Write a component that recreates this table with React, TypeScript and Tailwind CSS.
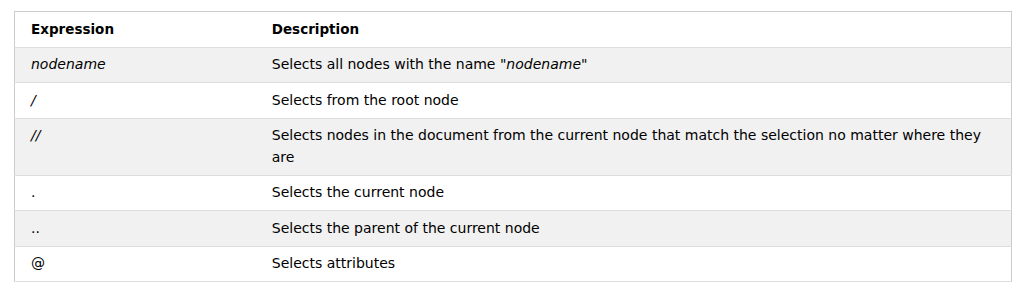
import React from 'react';

interface Row {
  expr: React.ReactNode;
  desc: React.ReactNode;
}

const ROWS: Row[] = [
  {
    expr: <i>nodename</i>,
    desc: (
      <>
        Selects all nodes with the name "<i>nodename</i>"
      </>
    ),
  },
  { expr: <i>/</i>, desc: 'Selects from the root node' },
  {
    expr: <i>//</i>,
    desc: 'Selects nodes in the document from the current node that match the selection no matter where they are',
  },
  { expr: '.', desc: 'Selects the current node' },
  { expr: '..', desc: 'Selects the parent of the current node' },
  { expr: '@', desc: 'Selects attributes' },
];

export default function App() {
  return (
    <div className="bg-white w-[1024px] h-[290px] pt-[11px] pl-[14px]" style={{ fontFamily: '"DejaVu Sans", Verdana, sans-serif' }}>
      <table className="w-[998px] border border-[#cccccc] border-collapse text-[14px] leading-[21.5px] text-black">
        <thead>
          <tr className="border-b border-[#dddddd]">
            <th className="w-[25%] text-left font-bold text-[13.5px] pl-4 pr-2 py-[6.5px]">Expression</th>
            <th className="text-left font-bold text-[13.5px] px-2 py-[6.5px]">Description</th>
          </tr>
        </thead>
        <tbody>
          {ROWS.map((row, idx) => (
            <tr
              key={idx}
              className={`border-b border-[#dddddd] ${idx % 2 === 0 ? 'bg-[#f1f1f1]' : 'bg-white'}`}
            >
              <td className="align-top pl-4 pr-2 py-[6.5px]">{row.expr}</td>
              <td className="align-top px-2 py-[6.5px]">{row.desc}</td>
            </tr>
          ))}
        </tbody>
      </table>
    </div>
  );
}
